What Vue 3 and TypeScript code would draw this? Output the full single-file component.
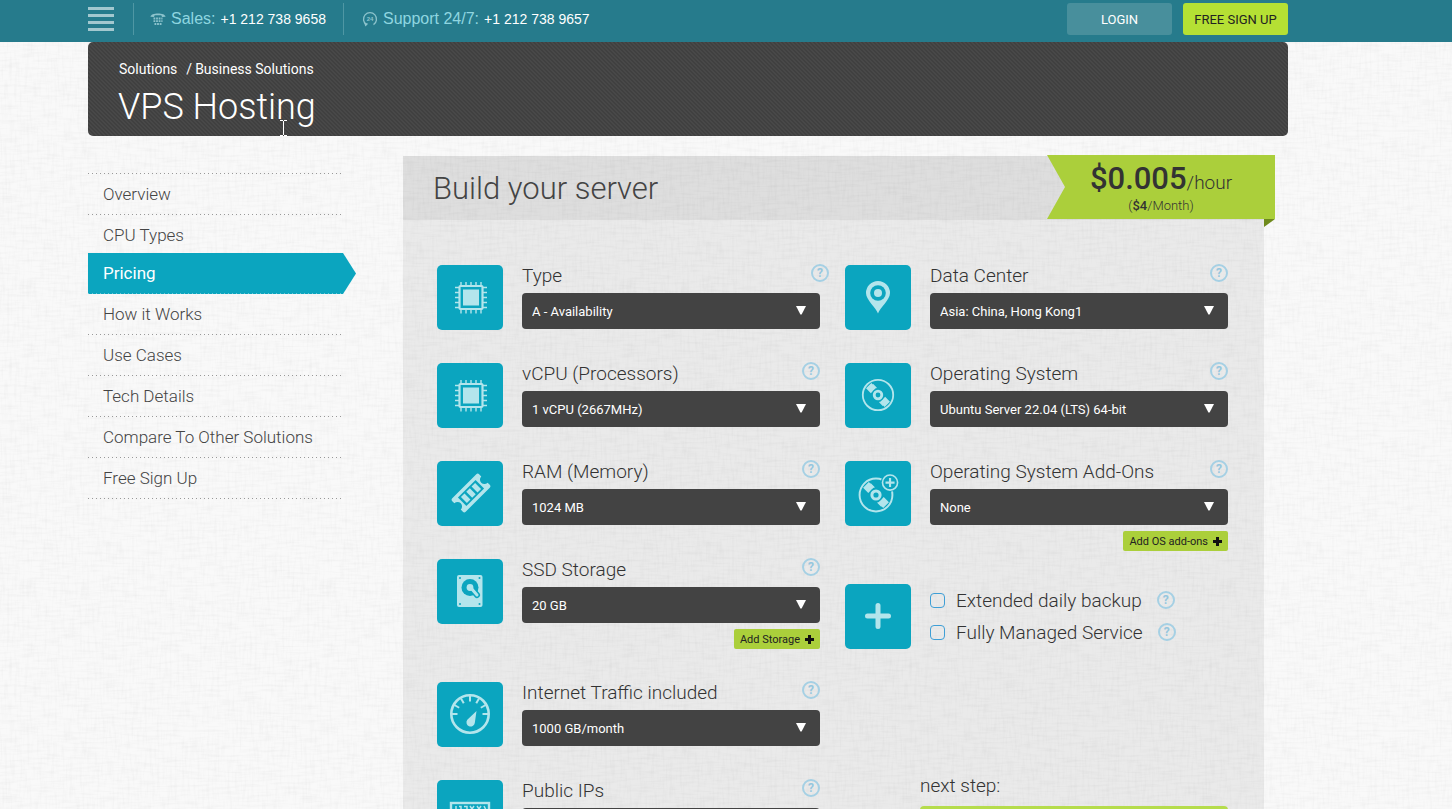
<script setup lang="ts">
import { ref } from 'vue'

type IconName = 'chip' | 'ram' | 'disk' | 'gauge' | 'ip' | 'pin' | 'disc' | 'discPlus'

interface Field {
  id: string
  icon: IconName
  label: string
  value: string
  action?: string
  wide?: boolean
}

const menu: string[] = [
  'Overview',
  'CPU Types',
  'Pricing',
  'How it Works',
  'Use Cases',
  'Tech Details',
  'Compare To Other Solutions',
  'Free Sign Up',
]
const active = 'Pricing'

const columns: Field[][] = [
  [
    { id: 'type', icon: 'chip', label: 'Type', value: 'A - Availability', wide: true },
    { id: 'vcpu', icon: 'chip', label: 'vCPU (Processors)', value: '1 vCPU (2667MHz)' },
    { id: 'ram', icon: 'ram', label: 'RAM (Memory)', value: '1024 MB' },
    { id: 'ssd', icon: 'disk', label: 'SSD Storage', value: '20 GB', action: 'Add Storage' },
    { id: 'traffic', icon: 'gauge', label: 'Internet Traffic included', value: '1000 GB/month' },
    { id: 'ips', icon: 'ip', label: 'Public IPs', value: '1' },
  ],
  [
    { id: 'dc', icon: 'pin', label: 'Data Center', value: 'Asia: China, Hong Kong1' },
    { id: 'os', icon: 'disc', label: 'Operating System', value: 'Ubuntu Server 22.04 (LTS) 64-bit' },
    { id: 'addons', icon: 'discPlus', label: 'Operating System Add-Ons', value: 'None', action: 'Add OS add-ons' },
  ],
]

const extras = ref([
  { id: 'backup', label: 'Extended daily backup', checked: false },
  { id: 'managed', label: 'Fully Managed Service', checked: false },
])

const pins = [24, 29, 34, 39, 44]
const ticks = [-90, -60, -30, 0, 30, 60, 90]
</script>

<template>
  <div class="page">
    <header class="topbar">
      <div class="wrap topbar-row">
        <button class="burger" aria-label="Menu"><i></i><i></i><i></i><i></i></button>
        <div class="contact">
          <svg width="16" height="14" viewBox="0 0 16 14" aria-hidden="true">
            <path d="M.5 4.8C.5 .3 15.5 .3 15.5 4.8L12 5 11.3 3.3H4.7L4 5Z" fill="#8cc3cc" />
            <path d="M3.5 6.5H12.5M3.5 9.2H12.5M4.5 12H12" stroke="#8cc3cc" stroke-width="1.8" stroke-dasharray="1.8 .8" />
          </svg>
          <span>Sales:</span><a href="#sales">+1 212 738 9658</a>
        </div>
        <div class="contact">
          <svg width="16" height="16" viewBox="0 0 16 16" aria-hidden="true">
            <path d="M4.5 13.6A6.5 6.5 0 1 1 11.5 13.6" fill="none" stroke="#8cc3cc" stroke-width="1.3" />
            <path d="M2 11.5L6.2 12.8 3.4 15.6Z" fill="#8cc3cc" />
            <text x="8" y="10" text-anchor="middle" class="tiny">24</text>
          </svg>
          <span>Support 24/7:</span><a href="#support">+1 212 738 9657</a>
        </div>
        <div class="account">
          <button class="btn login">LOGIN</button>
          <button class="btn signup">FREE SIGN UP</button>
        </div>
      </div>
    </header>

    <div class="wrap">
      <section class="hero">
        <nav class="crumbs" aria-label="Breadcrumb">
          <a href="#solutions">Solutions</a><span>/</span><a href="#business">Business Solutions</a>
        </nav>
        <h1>VPS Hosting</h1>
        <svg class="caret" width="7" height="16" viewBox="0 0 7 16" aria-hidden="true">
          <path d="M0 .5H3M4 .5H7M3.5 1V15M0 15.5H3M4 15.5H7" stroke="#fff" fill="none" />
        </svg>
      </section>

      <div class="body">
        <nav class="side" aria-label="VPS Hosting">
          <a
            v-for="item in menu"
            :key="item"
            href="#"
            :class="{ active: item === active }"
          >{{ item }}</a>
        </nav>

        <main class="panel">
          <div class="panel-head">
            <h2>Build your server</h2>
            <div class="ribbon">
              <p class="price"><b>$0.005</b>/hour</p>
              <p class="month">(<b>$4</b>/Month)</p>
            </div>
          </div>

          <form class="grid" @submit.prevent>
            <div v-for="(fields, c) in columns" :key="c" class="column">
              <div v-for="f in fields" :key="f.id" class="item">
                <div class="tile">
                  <svg viewBox="0 0 66 65" aria-hidden="true">
                    <g v-if="f.icon === 'chip'" stroke="#b3e5ec" fill="none">
                      <rect x="22.5" y="21" width="23" height="23" rx="1" stroke-width="2.2" />
                      <rect x="26" y="24.5" width="16" height="16" fill="#b3e5ec" stroke="none" />
                      <g stroke-width="1.4">
                        <path v-for="p in pins" :key="p" :d="`M${p} 17V21M${p} 44V48.5M18 ${p - 1.5}H22M46 ${p - 1.5}H50`" />
                      </g>
                    </g>
                    <g v-else-if="f.icon === 'ram'" transform="translate(34 32) rotate(-45)">
                      <path
                        d="M-17-9.5H17Q19-9.5 19-7.5V-4.5A4.5 4.5 0 0 0 19 4.5V7.5Q19 9.5 17 9.5H-17Q-19 9.5-19 7.5V4.5A4.5 4.5 0 0 0-19-4.5V-7.5Q-19-9.5-17-9.5Z"
                        fill="#b3e5ec"
                      />
                      <rect x="-12.5" y="-6" width="25" height="12" fill="#0ba5bf" />
                      <path d="M-7.5-4.2V4.2M0-4.2V4.2M7.5-4.2V4.2" stroke="#b3e5ec" stroke-width="5" />
                    </g>
                    <g v-else-if="f.icon === 'disk'">
                      <rect x="20" y="16" width="25.5" height="32" rx="2" fill="#b3e5ec" />
                      <circle cx="33" cy="28.5" r="8.5" fill="#0ba5bf" />
                      <path d="M34 29L40 36" stroke="#0ba5bf" stroke-width="6" stroke-linecap="round" />
                      <path d="M34 29L40 36" stroke="#b3e5ec" stroke-width="3" stroke-linecap="round" />
                      <circle cx="33" cy="28.5" r="3.4" fill="#b3e5ec" />
                      <g fill="#0ba5bf">
                        <circle cx="23" cy="19" r="1" /><circle cx="42.5" cy="19" r="1" />
                        <circle cx="23" cy="45" r="1" /><circle cx="42.5" cy="45" r="1" />
                      </g>
                    </g>
                    <g v-else-if="f.icon === 'gauge'" fill="none" stroke="#b3e5ec">
                      <circle cx="33" cy="32" r="18.7" stroke-width="2.6" />
                      <path v-for="t in ticks" :key="t" d="M33 14V19.5" stroke-width="2" :transform="`rotate(${t} 33 32)`" />
                      <path d="M39.5 29L37.8 41A4.2 4.2 0 1 1 30.3 37.8Z" fill="#b3e5ec" stroke="none" />
                    </g>
                    <g v-else-if="f.icon === 'ip'" fill="none" stroke="#b3e5ec">
                      <rect x="14" y="23" width="38" height="19" stroke-width="2.4" />
                      <path d="M19 26V32M22 26.5H24V32M27 26.5H30V32H27M33 26L37 32M37 26L33 32M40 26L44 32M44 26L40 32M47 26L50 32" stroke-width="1.5" />
                    </g>
                    <g v-else-if="f.icon === 'pin'">
                      <path d="M33 48.5C31 42.5 21 35 21 28A12 12 0 0 1 45 28C45 35 35 42.5 33 48.5Z" fill="#b3e5ec" />
                      <circle cx="33" cy="28" r="7.8" fill="#0ba5bf" />
                      <circle cx="33" cy="28" r="4" fill="#b3e5ec" />
                    </g>
                    <g
                      v-else
                      :transform="f.icon === 'disc' ? 'translate(33 32)' : 'translate(31 34) scale(1.08)'"
                      fill="none"
                      stroke="#b3e5ec"
                    >
                      <circle r="15.2" stroke-width="1.8" />
                      <path d="M-9.3-9.3L-4.5-4.5M4.5 4.5L9.3 9.3" stroke-width="7.5" />
                      <path d="M-5.2-10.5L-1.5-6.8M5.2 10.5L1.5 6.8" stroke-width="1.2" />
                      <circle r="6.4" fill="#0ba5bf" stroke="none" />
                      <circle r="3.8" stroke-width="2.8" />
                      <g v-if="f.icon === 'discPlus'" transform="translate(13 -11.5)">
                        <circle r="8.6" fill="#0ba5bf" stroke="none" />
                        <circle r="7" stroke-width="1.5" />
                        <path d="M-4.2 0H4.2M0-4.2V4.2" stroke-width="2" />
                      </g>
                    </g>
                  </svg>
                </div>
                <div class="field">
                  <div class="label-row">
                    <label :for="f.id">{{ f.label }}</label>
                    <button type="button" class="help" :class="{ out: f.wide }" :aria-label="`Help: ${f.label}`">?</button>
                  </div>
                  <div class="select">
                    <select :id="f.id"><option>{{ f.value }}</option></select>
                    <svg width="10" height="9" viewBox="0 0 10 9" aria-hidden="true"><path d="M0 0H10L5.6 8.5H4.4Z" fill="#fff" /></svg>
                  </div>
                  <button v-if="f.action" type="button" class="add">
                    {{ f.action }}
                    <svg width="9" height="9" viewBox="0 0 9 9" aria-hidden="true"><path d="M4.5 0V9M0 4.5H9" stroke="#111" stroke-width="3" /></svg>
                  </button>
                </div>
              </div>

              <template v-if="c === 1">
                <div class="item">
                  <div class="tile">
                    <svg viewBox="0 0 66 65" aria-hidden="true">
                      <path d="M33 21.5V42.5M22.5 32H43.5" stroke="#b3e5ec" stroke-width="5" stroke-linecap="round" />
                    </svg>
                  </div>
                  <div class="field">
                    <div v-for="e in extras" :key="e.id" class="check">
                      <input :id="e.id" v-model="e.checked" type="checkbox" />
                      <label :for="e.id">{{ e.label }}</label>
                      <button type="button" class="help" :aria-label="`Help: ${e.label}`">?</button>
                    </div>
                  </div>
                </div>
                <div class="next">
                  <p>next step:</p>
                  <button type="submit" class="go" aria-label="Continue"></button>
                </div>
              </template>
            </div>
          </form>
        </main>
      </div>
    </div>
  </div>
</template>

<style>
body {
  margin: 0;
  background-color: #f9f9f9;
}
</style>

<style scoped>
* {
  box-sizing: border-box;
}
.page {
  height: 100vh;
  overflow: hidden;
  font-family: Roboto, "Open Sans", sans-serif;
  font-weight: 300;
  color: #333;
  background-image: url("data:image/svg+xml,%3Csvg xmlns='http://www.w3.org/2000/svg' width='300' height='300'%3E%3Cfilter id='a' x='0' y='0' width='100%25' height='100%25'%3E%3CfeTurbulence type='fractalNoise' baseFrequency='.05 .4' numOctaves='2' stitchTiles='stitch'/%3E%3CfeColorMatrix values='0 0 0 0 0 0 0 0 0 0 0 0 0 0 0 .06 0 0 0 -.026'/%3E%3C/filter%3E%3Cfilter id='b' x='0' y='0' width='100%25' height='100%25'%3E%3CfeTurbulence type='fractalNoise' baseFrequency='.4 .05' numOctaves='2' seed='4' stitchTiles='stitch'/%3E%3CfeColorMatrix values='0 0 0 0 0 0 0 0 0 0 0 0 0 0 0 .05 0 0 0 -.022'/%3E%3C/filter%3E%3Crect width='300' height='300' filter='url(%23a)'/%3E%3Crect width='300' height='300' filter='url(%23b)'/%3E%3C/svg%3E");
}
a {
  color: inherit;
  text-decoration: none;
}
button {
  border: 0;
  padding: 0;
  font-family: inherit;
  cursor: pointer;
}
p,
h1,
h2 {
  margin: 0;
}
.wrap {
  padding: 0 164px 0 88px;
}
.topbar {
  background: #267b8c;
}
.topbar-row {
  display: flex;
  align-items: center;
  height: 42px;
}
.burger {
  display: flex;
  flex-direction: column;
  gap: 4px;
  width: 26px;
  margin: 0 19px 4px 0;
  background: none;
}
.burger i {
  height: 3px;
  background: #a3c8cf;
}
.contact {
  display: flex;
  align-items: center;
  height: 32px;
  margin-bottom: 4px;
  padding: 0 17px 0 16px;
  border-left: 1px solid #4f97a4;
  font: 400 16px "Liberation Sans", sans-serif;
  color: #8fd6e0;
}
.contact + .contact {
  padding-left: 18px;
}
.contact svg {
  margin-right: 5px;
}
.contact a {
  margin-left: 5px;
  font-size: 14px;
  color: #fff;
}
.tiny {
  font: 700 6px "Liberation Sans", sans-serif;
  fill: #8cc3cc;
}
.account {
  display: flex;
  gap: 11px;
  margin: 0 0 4px auto;
}
.btn {
  width: 105px;
  height: 32px;
  border-radius: 3px;
  font-size: 13px;
  font-weight: 400;
}
.login {
  background: #488f9c;
  color: #fff;
}
.signup {
  background: #b5e034;
  color: #222;
}
.hero {
  position: relative;
  height: 94px;
  padding: 16px 30px 0;
  border-radius: 5px;
  color: #fff;
  background: linear-gradient(45deg, #404040 25%, #484848 25% 50%, #404040 50% 75%, #484848 75%) 0 0 / 4px 4px;
}
.crumbs {
  display: flex;
  padding-left: 1px;
  font-size: 14px;
  font-weight: 400;
  line-height: 22px;
}
.crumbs span {
  margin: 0 3px 0 9px;
}
h1 {
  font-size: 36px;
  line-height: 54px;
  font-weight: 300;
}
.caret {
  position: absolute;
  left: 192px;
  top: 78px;
}
.body {
  display: flex;
  align-items: flex-start;
  padding-right: 24px;
}
.side {
  display: flex;
  flex-direction: column;
  flex: none;
  width: 254px;
  margin: 37px 61px 0 0;
  padding-top: 1px;
  background: linear-gradient(90deg, #999 1px, transparent 1px) 0 0 / 4px 1px repeat-x;
}
.side a {
  height: 41px;
  padding-left: 15px;
  background: linear-gradient(90deg, #999 1px, transparent 1px) 0 100% / 4px 1px repeat-x;
  font-size: 17px;
  line-height: 41px;
  color: #444;
}
.side .active {
  width: 268px;
  margin-top: -3px;
  background: linear-gradient(90deg, #6dc9d8 1px, transparent 1px) 0 100% / 4px 1px repeat-x #0ba5bf;
  clip-path: polygon(0 0, 255px 0, 100% 50%, 255px 100%, 0 100%);
  color: #fff;
  font-weight: 400;
}
.panel {
  flex: 1;
  margin-top: 20px;
  background: rgba(0, 0, 0, 0.06);
}
.panel-head {
  position: relative;
  display: flex;
  justify-content: space-between;
  height: 64px;
  padding-left: 30px;
  background: rgba(0, 0, 0, 0.05);
}
.panel-head::after {
  content: "";
  position: absolute;
  top: 63px;
  right: -11px;
  border-top: 8px solid #6f8a1c;
  border-right: 11px solid transparent;
}
h2 {
  font-size: 31px;
  line-height: 66px;
  font-weight: 300;
  color: #444;
}
.ribbon {
  width: 228px;
  height: 64px;
  margin: -1px -11px 0 0;
  padding-top: 7px;
  background: #abcf3b;
  clip-path: polygon(0 0, 100% 0, 100% 100%, 0 100%, 18px 50%);
  text-align: center;
  color: #333;
}
.price {
  font-size: 19px;
  line-height: 34px;
}
.price b {
  font-size: 31px;
  font-weight: 500;
}
.month {
  font-size: 13px;
  line-height: 12px;
}
.month b {
  font-weight: 500;
}
.grid {
  display: grid;
  grid-template-columns: 1fr 1fr;
  gap: 25px;
  padding: 45px 36px 45px 34px;
}
.column {
  display: flex;
  flex-direction: column;
  gap: 33px;
}
.item {
  display: flex;
  gap: 19px;
}
.tile {
  flex: none;
  width: 66px;
  height: 65px;
  border-radius: 5px;
  background: #0ba5bf;
}
.tile svg {
  display: block;
}
.field {
  display: flex;
  flex-direction: column;
  flex: 1;
}
.label-row {
  display: flex;
  justify-content: space-between;
  height: 29px;
  margin-top: -1px;
  font-size: 19px;
  line-height: 24px;
}
.help {
  flex: none;
  width: 18px;
  height: 18px;
  border: 2px solid #a5d0e4;
  border-radius: 50%;
  background: transparent;
  color: #95c6de;
  font-size: 12px;
  font-weight: 700;
  line-height: 14px;
}
.out {
  margin-right: -9px;
}
.select {
  position: relative;
}
.select select {
  display: block;
  width: 100%;
  height: 36px;
  padding: 0 30px 0 10px;
  border: 0;
  border-radius: 4px;
  appearance: none;
  background: #434343;
  color: #fff;
  font: 400 13px Roboto, sans-serif;
}
.select svg {
  position: absolute;
  top: 13px;
  right: 14px;
  pointer-events: none;
}
.add {
  display: flex;
  align-items: center;
  align-self: flex-end;
  gap: 5px;
  height: 20px;
  margin-top: 6px;
  padding: 0 6px;
  border-radius: 2px;
  background: #abcf3b;
  color: #222;
  font-size: 11px;
}
.check {
  display: flex;
  align-items: center;
  height: 32px;
  font-size: 19px;
}
.check input {
  appearance: none;
  width: 15px;
  height: 15px;
  margin: 0 11px 0 0;
  border: 1px solid #3f9fd6;
  border-radius: 4px;
}
.check .help {
  margin-left: 15px;
}
.next {
  margin: 92px 0 0 75px;
  font-size: 19px;
  line-height: 24px;
}
.go {
  width: 100%;
  height: 44px;
  margin-top: 8px;
  border-radius: 4px;
  background: #b5dc4c;
}
</style>
